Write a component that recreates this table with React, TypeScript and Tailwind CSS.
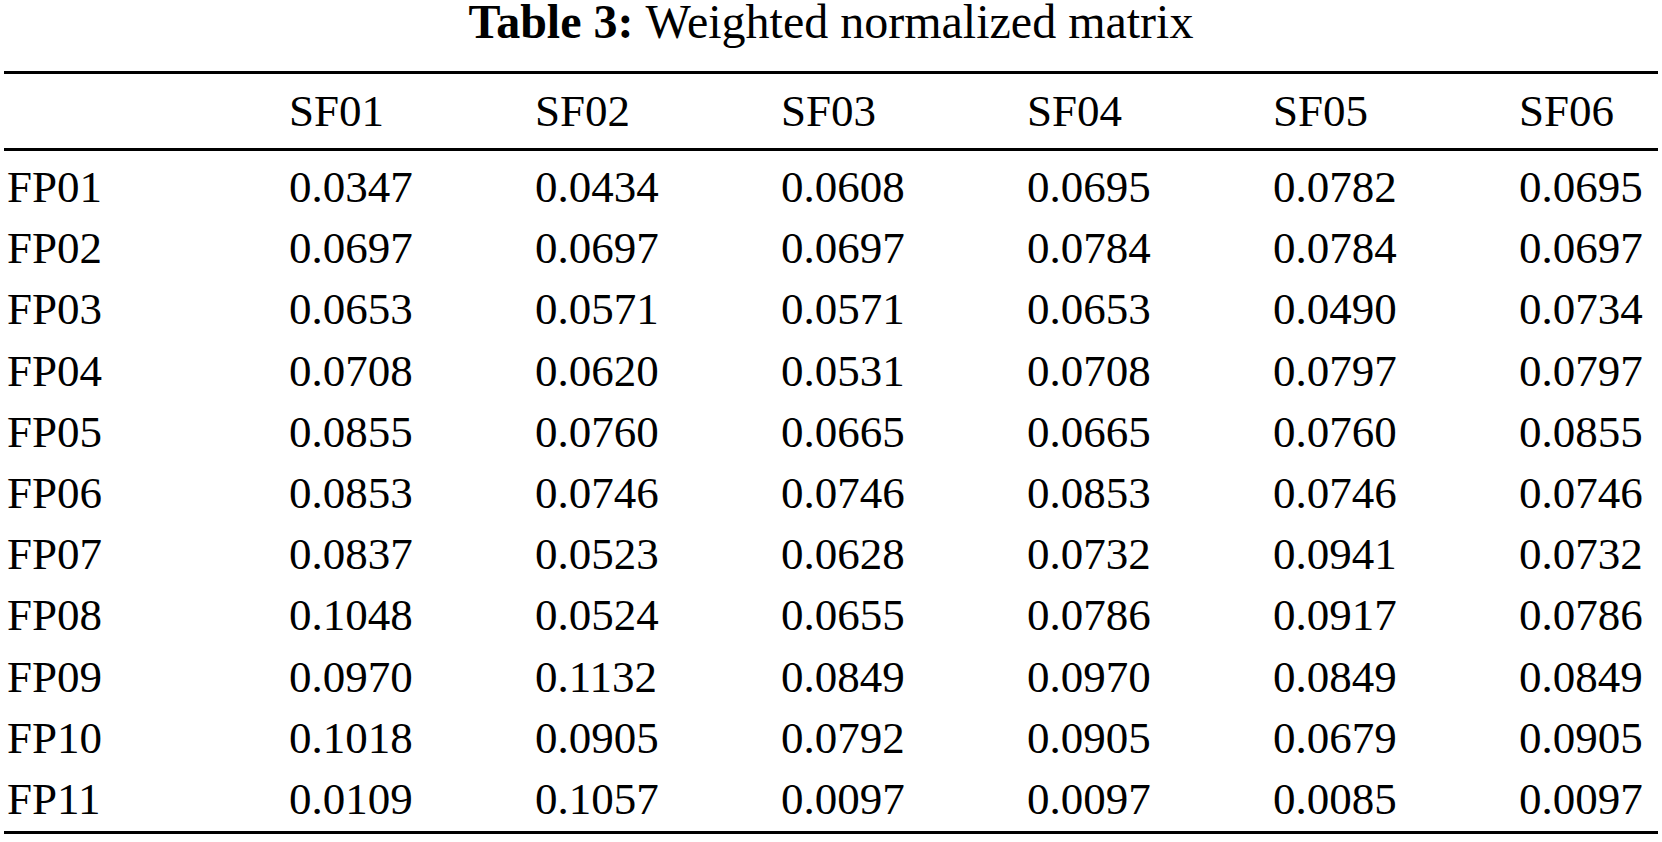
const columns = ['SF01', 'SF02', 'SF03', 'SF04', 'SF05', 'SF06'];

const rows: [string, string[]][] = [
  ['FP01', ['0.0347', '0.0434', '0.0608', '0.0695', '0.0782', '0.0695']],
  ['FP02', ['0.0697', '0.0697', '0.0697', '0.0784', '0.0784', '0.0697']],
  ['FP03', ['0.0653', '0.0571', '0.0571', '0.0653', '0.0490', '0.0734']],
  ['FP04', ['0.0708', '0.0620', '0.0531', '0.0708', '0.0797', '0.0797']],
  ['FP05', ['0.0855', '0.0760', '0.0665', '0.0665', '0.0760', '0.0855']],
  ['FP06', ['0.0853', '0.0746', '0.0746', '0.0853', '0.0746', '0.0746']],
  ['FP07', ['0.0837', '0.0523', '0.0628', '0.0732', '0.0941', '0.0732']],
  ['FP08', ['0.1048', '0.0524', '0.0655', '0.0786', '0.0917', '0.0786']],
  ['FP09', ['0.0970', '0.1132', '0.0849', '0.0970', '0.0849', '0.0849']],
  ['FP10', ['0.1018', '0.0905', '0.0792', '0.0905', '0.0679', '0.0905']],
  ['FP11', ['0.0109', '0.1057', '0.0097', '0.0097', '0.0085', '0.0097']],
];

const grid = 'grid grid-cols-[285px_246px_246px_246px_246px_246px_1fr]';

export default function App() {
  return (
    <div className="min-h-screen bg-white font-['Liberation_Serif',serif] text-[45px] text-black">
      <h1 className="text-center text-[48px] leading-[44px] mb-[27px] font-normal">
        <span className="font-bold">Table 3:</span>
        <span className="ml-[12px]">Weighted normalized matrix</span>
      </h1>

      <div className="mx-[4px] border-t-[3px] border-b-[3px] border-black">
        <div className={`${grid} h-[77px] items-center border-b-[3px] border-black leading-[50px]`}>
          <div />
          {columns.map((c) => (
            <div key={c}>{c}</div>
          ))}
        </div>

        <div className="pt-[6px] pb-[1px]">
          {rows.map(([label, values]) => (
            <div key={label} className={`${grid} leading-[61.2px]`}>
              <div className="pl-[3px]">{label}</div>
              {values.map((v, i) => (
                <div key={i}>{v}</div>
              ))}
            </div>
          ))}
        </div>
      </div>
    </div>
  );
}
